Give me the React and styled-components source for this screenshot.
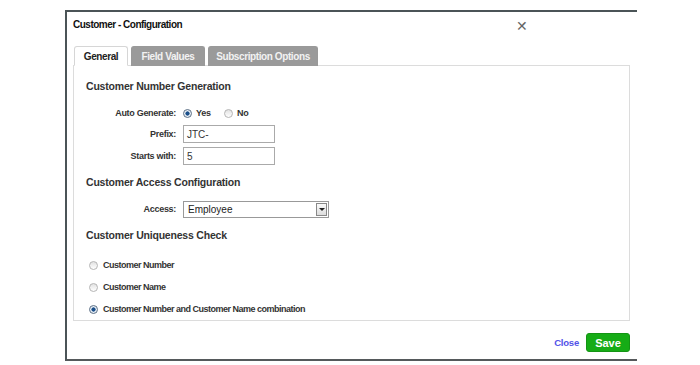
import React from 'react';
import styled, {createGlobalStyle} from 'styled-components';

const GlobalStyle = createGlobalStyle`
    html, body {
        margin: 0;
        padding: 0;
        background: #ffffff;
        font-family: "Liberation Sans", Arial, sans-serif;
    }
`;

// 바깥 페이지 영역
const Page = styled.div`
    width: 700px;
    height: 365px;
    padding: 10px 0 0 65px;
    box-sizing: border-box;
`;

// 대화상자 프레임 (오른쪽 테두리 없음)
const Dialog = styled.div`
    width: 572px;
    height: 351px;
    box-sizing: border-box;
    border-top: 2px solid #4b5457;
    border-left: 2px solid #4b5457;
    border-bottom: 2px solid #55595b;
    padding: 0 7px 0 6px;
    display: flex;
    flex-direction: column;
    background: #fff;
`;

const TitleBar = styled.div`
    height: 22px;
    padding-top: 1px;
    display: flex;
    align-items: center;
    justify-content: space-between;
`;

const Title = styled.h1`
    margin: 0;
    font-size: 10px;
    font-weight: bold;
    color: #111;
    letter-spacing: -0.5px;
`;

const CloseX = styled.span`
    margin-right: 102px;
    margin-top: 4px;
    font-size: 14px;
    color: #666;
    line-height: 1;
`;

const Tabs = styled.div`
    display: flex;
    gap: 3px;
    padding: 11px 0 0 1px;
`;

const Tab = styled.div`
    width: ${p => p.$w}px;
    height: 20px;
    box-sizing: border-box;
    border: 1px solid ${p => p.$active ? '#d6d6d6' : '#999'};
    border-bottom: ${p => p.$active ? '1px solid #fff' : 'none'};
    border-radius: 3px 3px 0 0;
    background: ${p => p.$active ? '#fff' : '#9a9a9a'};
    color: ${p => p.$active ? '#222' : '#f2f2f2'};
    font-size: 10px;
    font-weight: bold;
    letter-spacing: -0.4px;
    display: flex;
    align-items: center;
    justify-content: center;
    margin-bottom: -1px;
    position: relative;
    z-index: 1;
`;

const Panel = styled.div`
    height: 256px;
    box-sizing: border-box;
    border: 1px solid #dcdcdc;
    padding: 13px 12px 0 12px;
`;

const Heading = styled.h2`
    margin: ${p => p.$top || 0}px 0 0 0;
    font-size: 10.5px;
    font-weight: bold;
    color: #333;
    line-height: 14px;
    letter-spacing: -0.2px;
`;

const Form = styled.div`
    display: flex;
    flex-direction: column;
    gap: 4px;
    margin-top: ${p => p.$top || 0}px;
`;

const Row = styled.div`
    display: flex;
    align-items: center;
    height: ${p => p.$h || 18}px;
`;

const Label = styled.label`
    width: 90px;
    text-align: right;
    font-size: 9px;
    font-weight: bold;
    color: #333;
    letter-spacing: -0.3px;
    margin-right: 7px;
`;

const TextBox = styled.div`
    width: 92px;
    height: 18px;
    box-sizing: border-box;
    border: 1px solid #aaa;
    font-size: 10px;
    color: #333;
    padding: 0 3px;
    display: flex;
    align-items: center;
`;

const Select = styled.div`
    width: 146px;
    height: 17px;
    box-sizing: border-box;
    border: 1px solid #999;
    font-size: 10px;
    color: #222;
    padding-left: 4px;
    display: flex;
    align-items: center;
    justify-content: space-between;
`;

const SelectArrow = styled.span`
    width: 11px;
    height: 13px;
    margin-right: 1px;
    box-sizing: border-box;
    border: 1px solid #888;
    background: linear-gradient(#fafafa, #dcdcdc);
    display: flex;
    align-items: center;
    justify-content: center;

    &::after {
        content: '';
        border-left: 3px solid transparent;
        border-right: 3px solid transparent;
        border-top: 3px solid #222;
    }
`;

const Radio = styled.span`
    width: 9px;
    height: 9px;
    border-radius: 50%;
    box-sizing: border-box;
    border: 1px solid ${p => p.$on ? '#5b6f85' : '#b5b5b5'};
    background: ${p => p.$on
        ? 'radial-gradient(circle, #1a4f8a 0 1.8px, #e8eef5 2.4px)'
        : 'linear-gradient(#e2e2e2, #ffffff)'};
    margin-right: ${p => p.$space || 4}px;
    flex-shrink: 0;
`;

const Choice = styled.span`
    display: inline-flex;
    align-items: center;
    margin-right: ${p => p.$gap || 0}px;
    font-size: 9px;
    font-weight: bold;
    color: #333;
    letter-spacing: -0.2px;
`;

const Options = styled.div`
    display: flex;
    flex-direction: column;
    gap: 10px;
    margin-top: 17px;
    padding-left: 3px;
`;

const Option = styled.div`
    display: flex;
    align-items: center;
    height: 12px;
    font-size: 9px;
    font-weight: bold;
    color: #333;
    letter-spacing: -0.5px;
`;

const Footer = styled.div`
    display: flex;
    justify-content: flex-end;
    align-items: center;
    gap: 7px;
    padding-top: 12px;
`;

const CloseLink = styled.a`
    font-size: 9.5px;
    font-weight: bold;
    color: #5252e8;
    text-decoration: none;
    letter-spacing: -0.2px;
`;

const SaveButton = styled.button`
    width: 44px;
    height: 19px;
    border: 1px solid #149414;
    border-radius: 3px;
    background: #16ac16;
    color: #fff;
    font-family: inherit;
    font-size: 11px;
    font-weight: bold;
    padding: 0;
`;

const uniqueness = [
    {label: 'Customer Number', on: false},
    {label: 'Customer Name', on: false},
    {label: 'Customer Number and Customer Name combination', on: true},
];

export default function App() {
    return (
        <Page>
            <GlobalStyle />
            <Dialog>
                <TitleBar>
                    <Title>Customer - Configuration</Title>
                    <CloseX>✕</CloseX>
                </TitleBar>

                {/* 탭 영역 */}
                <Tabs>
                    <Tab $active $w={54}>General</Tab>
                    <Tab $w={74}>Field Values</Tab>
                    <Tab $w={110}>Subscription Options</Tab>
                </Tabs>

                <Panel>
                    <Heading>Customer Number Generation</Heading>
                    <Form $top={12}>
                        <Row $h={16}>
                            <Label>Auto Generate:</Label>
                            <Choice $gap={13}><Radio $on />Yes</Choice>
                            <Choice><Radio />No</Choice>
                        </Row>
                        <Row>
                            <Label>Prefix:</Label>
                            <TextBox>JTC-</TextBox>
                        </Row>
                        <Row>
                            <Label>Starts with:</Label>
                            <TextBox>5</TextBox>
                        </Row>
                    </Form>

                    <Heading $top={10}>Customer Access Configuration</Heading>
                    <Form $top={11}>
                        <Row>
                            <Label>Access:</Label>
                            <Select>Employee<SelectArrow /></Select>
                        </Row>
                    </Form>

                    <Heading $top={10}>Customer Uniqueness Check</Heading>
                    <Options>
                        {uniqueness.map(o => (
                            <Option key={o.label}><Radio $on={o.on} $space={5} />{o.label}</Option>
                        ))}
                    </Options>
                </Panel>

                <Footer>
                    <CloseLink href="#">Close</CloseLink>
                    <SaveButton>Save</SaveButton>
                </Footer>
            </Dialog>
        </Page>
    );
}
